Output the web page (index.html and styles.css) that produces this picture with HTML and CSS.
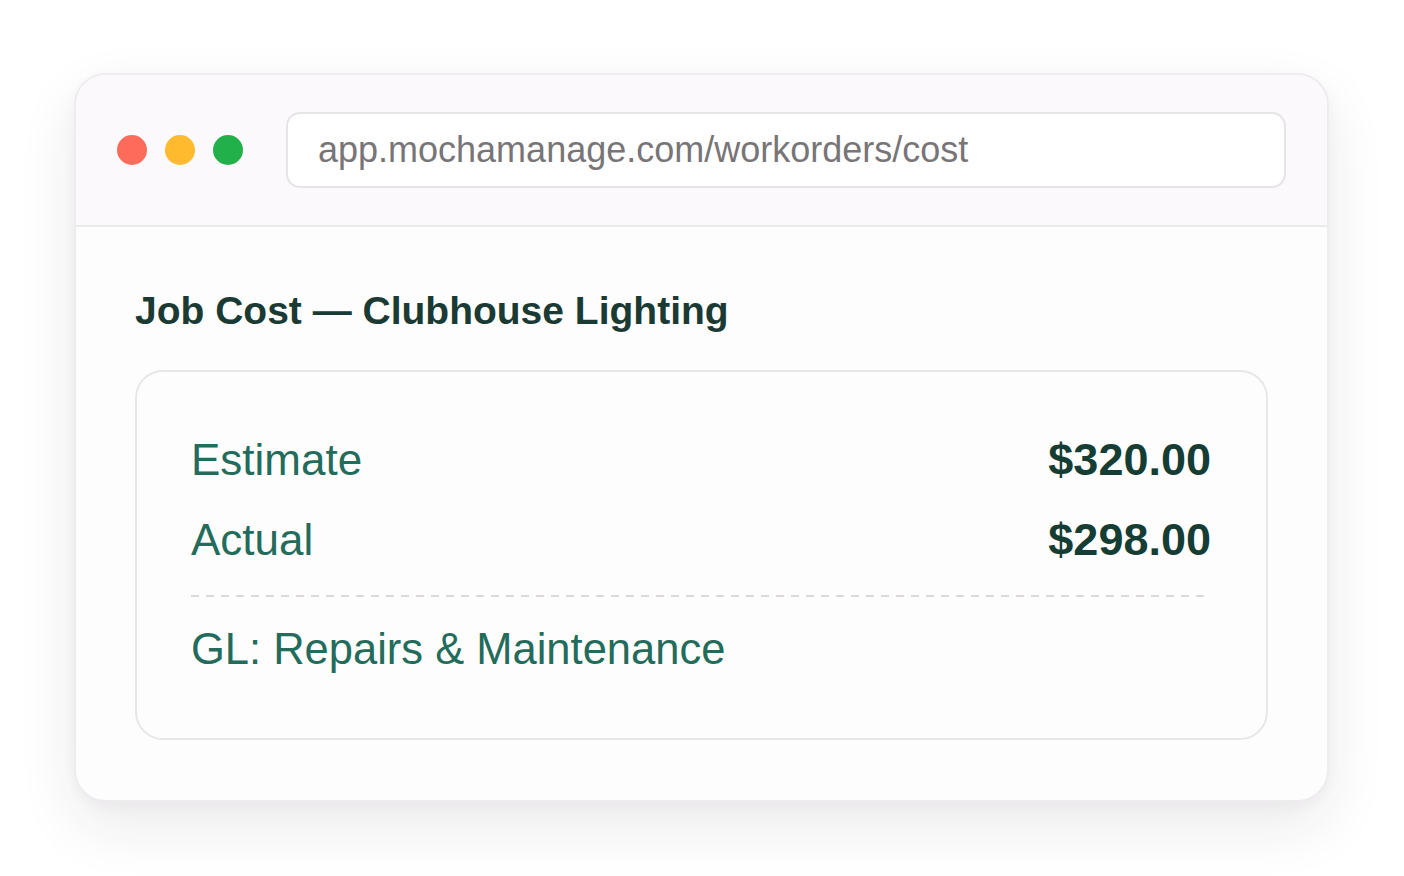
FILE: index.html
```html
<!DOCTYPE html>
<html lang="en">
<head>
<meta charset="utf-8">
<title>Job Cost</title>
<link rel="stylesheet" href="styles.css">
</head>
<body>
<div class="window">
  <div class="chrome">
    <div class="dots">
      <span class="dot red"></span>
      <span class="dot yellow"></span>
      <span class="dot green"></span>
    </div>
    <div class="url">app.mochamanage.com/workorders/cost</div>
  </div>
  <div class="content">
    <h1 class="title">Job Cost — Clubhouse Lighting</h1>
    <div class="card">
      <div class="row">
        <span class="label">Estimate</span>
        <span class="amount">$320.00</span>
      </div>
      <div class="row">
        <span class="label">Actual</span>
        <span class="amount">$298.00</span>
      </div>
      <div class="divider"></div>
      <div class="row">
        <span class="label gl">GL: Repairs &amp; Maintenance</span>
      </div>
    </div>
  </div>
</div>
</body>
</html>
```
FILE: styles.css
```css
* { box-sizing: border-box; }
html, body { margin: 0; background: #ffffff; }
body {
  font-family: "Liberation Sans", Arial, sans-serif;
  padding: 73px 75px 75px 74px;
}
.window {
  width: 1255px;
  border: 2px solid #eeecef;
  border-radius: 32px;
  background: #fefdfe;
  box-shadow: 0 24px 60px rgba(40, 30, 40, 0.09), 0 4px 14px rgba(40, 30, 40, 0.04);
  overflow: hidden;
}
.chrome {
  height: 152px;
  background: #fbf9fb;
  border-bottom: 2px solid #ebe9ec;
  display: flex;
  align-items: center;
  padding: 0 41px;
}
.dots { display: flex; gap: 18px; }
.dot { width: 30px; height: 30px; border-radius: 50%; display: block; }
.red { background: #ff6b5a; }
.yellow { background: #ffba2d; }
.green { background: #22b04a; }
.url {
  margin-left: 43px;
  flex: 1;
  height: 76px;
  border: 2px solid #e6e4e7;
  border-radius: 14px;
  background: #ffffff;
  display: flex;
  align-items: center;
  padding-left: 30px;
  font-size: 36px;
  color: #777577;
}
.content {
  padding: 61px 59px 60px 59px;
}
.title {
  margin: 0 0 35px 0;
  font-size: 39px;
  line-height: 1.2;
  font-weight: 700;
  color: #1b3a33;
}
.card {
  border: 2px solid #e8e6e9;
  border-radius: 28px;
  background: #fefdfe;
  padding: 63px 55px 64px 54px;
}
.row {
  display: flex;
  justify-content: space-between;
  align-items: center;
  font-size: 44px;
  line-height: 50px;
  height: 50px;
}
.row + .row { margin-top: 30px; }
.label { color: #236b5a; }
.gl { font-size: 43.5px; }
.amount { color: #163d34; font-weight: 700; font-size: 45px; }
.divider {
  margin: 30px 0 27px 0;
  height: 2px;
  background: repeating-linear-gradient(to right, #dcd8db 0, #dcd8db 8px, transparent 8px, transparent 15px);
}
```
